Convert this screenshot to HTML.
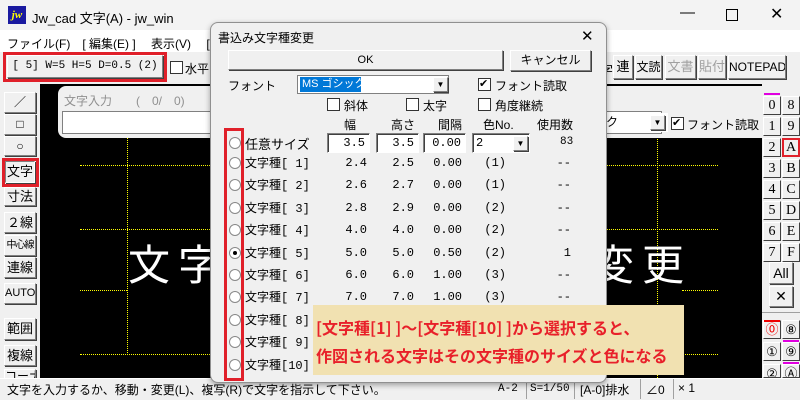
<!DOCTYPE html>
<html><head><meta charset="utf-8"><style>
*{margin:0;padding:0;box-sizing:border-box}
body{width:800px;height:400px;overflow:hidden;background:#f0f0f0;font-family:"Liberation Sans","Noto Sans CJK JP",sans-serif;font-size:12px;color:#000;position:relative}
.a{position:absolute;white-space:nowrap}
.btn{position:absolute;white-space:nowrap;overflow:hidden;background:#f0f0f0;border:1px solid;border-color:#fff #808080 #808080 #fff;box-shadow:1px 1px 0 #404040;text-align:center;font-size:12px}
.mono{font-family:"Liberation Mono","Noto Sans CJK JP",monospace}
.blk{position:absolute;left:40px;top:84px;width:722px;height:294px;background:#000}
.dv{position:absolute;border-left:1px dotted #ff0;width:0}
.dh{position:absolute;border-top:1px dotted #ff0;height:0}
.rb{position:absolute;width:18px;height:19px;background:#f0f0f0;border:1px solid;border-color:#fff #404040 #404040 #fff;font-family:"Liberation Serif",serif;font-size:14px;text-align:center;line-height:17px}
.radio{position:absolute;left:229px;width:12px;height:12px;border-radius:50%;border:1px solid #888;background:#fff}
.cb{position:absolute;width:13px;height:13px;border:1px solid #333;background:#fff}
.inp{position:absolute;background:#fff;border:1px solid;border-color:#808080 #fff #fff #808080;box-shadow:inset 1px 1px 0 #404040;text-align:right;padding-right:4px;font-size:12px;line-height:18px}
</style></head><body>
<!-- title -->
<div class="a" style="left:0;top:0;width:800px;height:30px;background:#f3f3f3"></div>
<div class="a" style="left:8px;top:6px;width:18px;height:18px;background:#1a1aa0;color:#ff0;font:bold italic 11px 'Liberation Serif',serif;line-height:18px;text-align:center">jw</div>
<div class="a" style="left:32px;top:8px;font-size:13px">Jw_cad 文字(A) - jw_win</div>
<div class="a" style="left:680px;top:4px;font-size:15px">—</div>
<div class="a" style="left:726px;top:9px;width:12px;height:12px;border:1px solid #000"></div>
<div class="a" style="left:770px;top:4px;font-size:16px">✕</div>
<div class="a" style="left:0;top:30px;width:800px;height:22px;background:#fff"></div>
<div class="a" style="left:7px;top:35px;font-size:12px">ファイル(F)　[ 編集(E) ]　 表示(V)　 [ 作図</div>
<!-- toolbar -->
<div class="btn mono" style="left:7px;top:55px;width:156px;height:23px;line-height:21px;font-size:11px">[ 5] W=5 H=5 D=0.5 (2)</div>
<div class="a" style="left:3px;top:52px;width:164px;height:30px;border:3px solid #e0202a"></div>
<div class="cb" style="left:170px;top:61px"></div>
<div class="a" style="left:185px;top:60px">水平</div>
<div class="a" style="left:600px;top:60px;font-size:13px">字</div>
<div class="btn" style="left:613px;top:55px;width:20px;height:24px;line-height:22px;font-size:13px">連</div>
<div class="btn" style="left:635px;top:55px;width:27px;height:24px;line-height:22px;font-size:12px">文読</div>
<div class="btn" style="left:665px;top:55px;width:31px;height:24px;line-height:22px;font-size:13px;color:#a0a0a0">文書</div>
<div class="btn" style="left:698px;top:55px;width:28px;height:24px;line-height:22px;font-size:13px;color:#a0a0a0">貼付</div>
<div class="btn" style="left:728px;top:55px;width:58px;height:24px;line-height:22px;font-size:12px">NOTEPAD</div>
<!-- left tools -->
<div class="btn" style="left:4px;top:92px;width:32px;height:21px;line-height:19px">／</div>
<div class="btn" style="left:4px;top:114px;width:32px;height:21px;line-height:19px">□</div>
<div class="btn" style="left:4px;top:136px;width:32px;height:20px;line-height:18px">○</div>
<div class="btn" style="left:5px;top:161px;width:30px;height:22px;line-height:20px;font-size:13px;border-color:#808080 #fff #fff #808080">文字</div>
<div class="a" style="left:2px;top:158px;width:37px;height:29px;border:3px solid #e0202a"></div>
<div class="btn" style="left:4px;top:187px;width:32px;height:19px;line-height:17px;font-size:13px">寸法</div>
<div class="btn" style="left:4px;top:212px;width:32px;height:21px;line-height:19px;font-size:13px">２線</div>
<div class="btn" style="left:4px;top:235px;width:32px;height:21px;line-height:19px;font-size:10px;letter-spacing:-1px">中心線</div>
<div class="btn" style="left:4px;top:257px;width:32px;height:21px;line-height:19px;font-size:13px">連線</div>
<div class="btn" style="left:4px;top:283px;width:32px;height:21px;line-height:19px;font-size:11px">AUTO</div>
<div class="btn" style="left:4px;top:318px;width:32px;height:22px;line-height:20px;font-size:13px">範囲</div>
<div class="btn" style="left:4px;top:345px;width:32px;height:21px;line-height:19px;font-size:13px">複線</div>
<div class="btn" style="left:4px;top:369px;width:32px;height:10px;line-height:12px;font-size:12px">コーナー</div>
<!-- drawing -->
<div class="blk"></div>
<div class="dv" style="left:127px;top:137px;height:218px"></div>
<div class="dv" style="left:657px;top:137px;height:241px"></div>
<div class="dh" style="left:80px;top:165px;width:140px"></div>
<div class="dh" style="left:600px;top:165px;width:118px"></div>
<div class="dh" style="left:80px;top:229px;width:140px"></div>
<div class="dh" style="left:605px;top:229px;width:113px"></div>
<div class="dh" style="left:80px;top:290px;width:47px"></div>
<div class="dh" style="left:682px;top:290px;width:36px"></div>
<div class="dh" style="left:80px;top:354px;width:140px"></div>
<div class="dh" style="left:682px;top:354px;width:36px"></div>
<div class="a" style="left:128px;top:238px;color:#fff;font-size:42px;letter-spacing:8px;line-height:50px;font-family:'Noto Sans CJK JP',sans-serif">文字</div>
<div class="a" style="left:592px;top:238px;color:#fff;font-size:42px;letter-spacing:8px;line-height:50px;font-family:'Noto Sans CJK JP',sans-serif">変更</div>
<!-- text input panel -->
<div class="a" style="left:58px;top:86px;width:732px;height:52px;background:#f0f0f0;border-radius:8px"></div>
<div class="a" style="left:64px;top:92px;color:#909090;font-size:12px">文字入力　　(　0/　0)</div>
<div class="a" style="left:62px;top:111px;width:600px;height:23px;background:#fff;border:1px solid #808080"></div>
<div class="a" style="left:604px;top:113px;width:64px;height:19px;background:#fff;font-size:12px;line-height:19px;padding-left:2px">ク</div>
<div class="btn" style="left:650px;top:115px;width:15px;height:15px;font-size:8px;line-height:13px">▼</div>
<div class="cb" style="left:671px;top:117px;font-size:11px;line-height:11px">✔</div>
<div class="a" style="left:687px;top:116px;font-size:12px">フォント読取</div>
<!-- right column -->
<div class="a" style="left:762px;top:84px;width:38px;height:294px;background:#f0f0f0"></div>
<div class="a" style="left:764px;top:93px;width:16px;height:2px;background:#e000e0"></div>
<div class="rb" style="left:763px;top:96px">0</div><div class="rb" style="left:782px;top:96px">8</div>
<div class="rb" style="left:763px;top:117px">1</div><div class="rb" style="left:782px;top:117px">9</div>
<div class="rb" style="left:763px;top:138px">2</div><div class="rb" style="left:782px;top:138px;border:2px solid #e0202a;line-height:15px">A</div>
<div class="rb" style="left:763px;top:159px">3</div><div class="rb" style="left:782px;top:159px">B</div>
<div class="rb" style="left:763px;top:180px">4</div><div class="rb" style="left:782px;top:180px">C</div>
<div class="rb" style="left:763px;top:201px">5</div><div class="rb" style="left:782px;top:201px">D</div>
<div class="rb" style="left:763px;top:222px">6</div><div class="rb" style="left:782px;top:222px">E</div>
<div class="rb" style="left:763px;top:243px">7</div><div class="rb" style="left:782px;top:243px">F</div>
<div class="btn" style="left:769px;top:262px;width:24px;height:22px;line-height:20px;font-size:14px">All</div>
<div class="btn" style="left:769px;top:286px;width:24px;height:21px;line-height:19px;font-size:14px">✕</div>
<div class="a" style="left:762px;top:312px;width:38px;height:1px;background:#a0a0a0"></div>
<div class="rb" style="left:763px;top:320px;color:#e00;font-size:13px">⓪</div><div class="rb" style="left:782px;top:320px;font-size:13px">⑧</div>
<div class="a" style="left:764px;top:320px;width:16px;height:2px;background:#e00"></div>
<div class="a" style="left:783px;top:340px;width:16px;height:2px;background:#e000e0"></div>
<div class="rb" style="left:763px;top:342px;font-size:13px">①</div><div class="rb" style="left:782px;top:342px;font-size:13px">⑨</div>
<div class="a" style="left:783px;top:362px;width:16px;height:2px;background:#e000e0"></div>
<div class="rb" style="left:763px;top:364px;font-size:13px;height:14px;overflow:hidden">②</div><div class="rb" style="left:782px;top:364px;font-size:13px;height:14px;overflow:hidden">Ⓐ</div>
<!-- status -->
<div class="a" style="left:0;top:378px;width:800px;height:22px;background:#f0f0f0;border-top:1px solid #fff"></div>
<div class="a" style="left:7px;top:381px;font-size:12px">文字を入力するか、移動・変更(L)、複写(R)で文字を指示して下さい。</div>
<div class="a mono" style="left:498px;top:383px;font-size:11px">A-2</div>
<div class="a" style="left:526px;top:379px;width:1px;height:20px;background:#a0a0a0"></div>
<div class="a mono" style="left:530px;top:383px;font-size:11px">S=1/50</div>
<div class="a" style="left:574px;top:379px;width:1px;height:20px;background:#a0a0a0"></div>
<div class="a" style="left:580px;top:381px;font-size:12px">[A-0]排水</div>
<div class="a" style="left:640px;top:379px;width:1px;height:20px;background:#a0a0a0"></div>
<div class="a" style="left:646px;top:381px;font-size:12px">∠0</div>
<div class="a" style="left:673px;top:379px;width:1px;height:20px;background:#a0a0a0"></div>
<div class="a" style="left:678px;top:381px;font-size:12px">× 1</div>
<!-- dialog -->
<div class="a" style="left:210px;top:22px;width:397px;height:361px;background:#f0f0f0;border:1px solid #909090;border-radius:8px;box-shadow:0 2px 6px rgba(0,0,0,.35)"></div>
<div class="a" style="left:218px;top:29px;font-size:12px">書込み文字種変更</div>
<div class="a" style="left:581px;top:27px;font-size:15px">✕</div>
<div class="btn" style="left:228px;top:50px;width:275px;height:20px;line-height:18px;font-size:11px">OK</div>
<div class="btn" style="left:510px;top:50px;width:81px;height:21px;line-height:19px;font-size:12px">キャンセル</div>
<div class="a" style="left:228px;top:77px;font-size:12px">フォント</div>
<div class="a" style="left:297px;top:75px;width:152px;height:19px;background:#fff;border:1px solid #808080"></div>
<div class="a" style="left:300px;top:77px;width:61px;height:15px;background:#0078d7;color:#fff;font-size:11px;line-height:15px;padding-left:2px">MS ゴシック</div>
<div class="btn" style="left:433px;top:77px;width:15px;height:15px;font-size:8px;line-height:13px">▼</div>
<div class="cb" style="left:478px;top:78px;font-size:11px;line-height:11px">✔</div>
<div class="a" style="left:495px;top:77px;font-size:12px">フォント読取</div>
<div class="cb" style="left:327px;top:98px"></div><div class="a" style="left:344px;top:97px">斜体</div>
<div class="cb" style="left:406px;top:98px"></div><div class="a" style="left:423px;top:97px">太字</div>
<div class="cb" style="left:478px;top:98px"></div><div class="a" style="left:495px;top:97px">角度継続</div>
<div class="a" style="left:344px;top:116px">幅</div>
<div class="a" style="left:391px;top:116px">高さ</div>
<div class="a" style="left:438px;top:116px">間隔</div>
<div class="a" style="left:483px;top:116px">色No.</div>
<div class="a" style="left:537px;top:116px">使用数</div>
<div class="inp mono" style="left:327px;top:133px;width:43px;height:20px">3.5</div>
<div class="inp mono" style="left:376px;top:133px;width:43px;height:20px">3.5</div>
<div class="inp mono" style="left:423px;top:133px;width:43px;height:20px">0.00</div>
<div class="inp mono" style="left:472px;top:133px;width:58px;height:20px;text-align:left;padding-left:3px">2</div>
<div class="btn" style="left:513px;top:136px;width:15px;height:15px;font-size:8px;line-height:13px">▼</div>
<div class="a mono" style="left:560px;top:136px;font-size:11px">83</div>
<div id="rows"></div>
<div class="a" style="left:224px;top:128px;width:20px;height:253px;border:3px solid #e0202a"></div>
<!-- callout -->
<div class="a" style="left:313px;top:305px;width:371px;height:70px;background:#f1e1b1"></div>
<div class="a" style="left:316px;top:315px;color:#e8202a;font-weight:bold;font-size:16px;font-family:'Noto Sans CJK JP',sans-serif;line-height:24px">[文字種[1] ]～[文字種[10] ]から選択すると、</div>
<div class="a" style="left:316px;top:343px;color:#e8202a;font-weight:bold;font-size:16px;font-family:'Noto Sans CJK JP',sans-serif;line-height:24px">作図される文字はその文字種のサイズと色になる</div>
<script>
var d=[["1","2.4","2.5","0.00","(1)","--"],["2","2.6","2.7","0.00","(1)","--"],["3","2.8","2.9","0.00","(2)","--"],["4","4.0","4.0","0.00","(2)","--"],["5","5.0","5.0","0.50","(2)","1"],["6","6.0","6.0","1.00","(3)","--"],["7","7.0","7.0","1.00","(3)","--"],["8","","","","",""],["9","","","","",""],["10","","","","",""]];
var h='<div class="radio" style="top:137px"></div><div class="a" style="left:245px;top:134px;font-size:13px">任意サイズ</div>';
for(var i=0;i<10;i++){var y=155+i*22.4;var r=d[i];
h+='<div class="radio" style="top:'+(y+2)+'px">'+(i==4?'<div style="position:absolute;left:3px;top:3px;width:4px;height:4px;border-radius:50%;background:#000"></div>':'')+'</div>';
h+='<div class="a mono" style="left:245px;top:'+(y-1)+'px;font-size:12px">文字種['+(r[0].length<2?' ':'')+r[0]+']</div>';
var cols=[[367,r[1]],[414,r[2]],[462,r[3]],[506,r[4]],[571,r[5]]];
for(var c=0;c<5;c++){if(cols[c][1])h+='<div class="a mono" style="right:'+(800-cols[c][0])+'px;top:'+(y+1)+'px;font-size:12px">'+cols[c][1]+'</div>';}}
document.getElementById('rows').outerHTML=h;
</script>
</body></html>
